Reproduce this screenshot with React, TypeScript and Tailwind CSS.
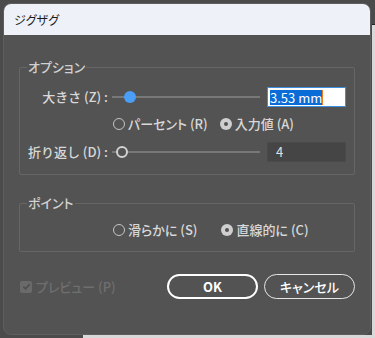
const font = "font-['Noto_Sans_CJK_JP','Noto_Sans',sans-serif] [font-feature-settings:'palt']";

function Radio({ checked, label }: { checked?: boolean; label: string }) {
  return (
    <div className="flex items-center gap-[3px]">
      {checked ? (
        <span className="flex h-[12px] w-[12px] items-center justify-center rounded-full bg-[#cfcfcf]">
          <span className="h-[4px] w-[4px] rounded-full bg-[#535353]" />
        </span>
      ) : (
        <span className="h-[12px] w-[12px] rounded-full border border-[#c4c4c4]" />
      )}
      <span>{label}</span>
    </div>
  );
}

function Slider({ pos, filled }: { pos: number; filled?: boolean }) {
  return (
    <div className="relative h-[20px] w-[148px]">
      <div className="absolute left-0 right-0 top-[9px] h-[2px] bg-[#787878]" />
      {filled ? (
        <span
          className="absolute top-[4px] h-[12px] w-[12px] rounded-full bg-[#4a9ef5]"
          style={{ left: pos }}
        />
      ) : (
        <span
          className="absolute top-[4px] h-[12px] w-[12px] rounded-full border-2 border-[#d2d2d2] bg-[#535353]"
          style={{ left: pos }}
        />
      )}
    </div>
  );
}

export default function App() {
  return (
    <div className={`relative h-[338px] w-[375px] overflow-hidden bg-[#4b4b4b] ${font}`}>
      <div className="absolute left-[372px] top-[24px] h-[320px] w-[10px] border-t border-[#222] bg-[#d9d9d9]" />
      <div className="absolute left-[83px] top-[335px] h-[10px] w-[300px] bg-[#d9d9d9]" />

      <div className="absolute left-[3px] top-[3px] flex h-[332px] w-[368px] flex-col overflow-hidden rounded-[8px] border border-[#5e5e5e] bg-[#535353]">
        <div className="flex h-[31px] shrink-0 items-center bg-[#eef1f8] pl-[10px] text-[12px] text-[#1a1a1a]">
          ジグザグ
        </div>

        <div className="flex flex-1 flex-col px-[15px] pt-[24px] text-[13px] font-medium text-[#d8d8d8]">
          <fieldset className="rounded-[2px] border border-[#666] pb-[12px]">
            <legend className="ml-[7px] px-[1px] text-[13px] leading-[16px] text-[#d0d0d0]">オプション</legend>
            <div className="mt-[12px] flex h-[20px] items-center">
              <div className="w-[88px] whitespace-nowrap text-right [font-feature-settings:normal]">大きさ (Z) :</div>
              <div className="ml-[4px]">
                <Slider pos={12} filled />
              </div>
              <div className="ml-[7px] flex h-[20px] w-[79px] items-center border border-[#3d8fe0] bg-white pl-[2px] text-[13px] font-normal text-white">
                <span className="bg-[#0a6cd6] leading-[15px]">3.53 mm</span>
                <span className="h-[15px] w-[1px] bg-[#f07a1a]" />
              </div>
            </div>
            <div className="mt-[7px] flex h-[20px] items-center gap-[12px] pl-[93px]">
              <Radio label="パーセント (R)" />
              <Radio checked label="入力値 (A)" />
            </div>
            <div className="mt-[8px] flex h-[20px] items-center">
              <div className="w-[88px] whitespace-nowrap text-right [font-feature-settings:normal]">折り返し (D) :</div>
              <div className="ml-[4px]">
                <Slider pos={4} />
              </div>
              <div className="ml-[7px] flex h-[20px] w-[79px] items-center border border-[#4a4a4a] bg-[#454545] pl-[8px] text-[13px] font-normal text-[#e0e0e0]">
                4
              </div>
            </div>
          </fieldset>

          <fieldset className="mt-[20px] rounded-[2px] border border-[#666] pb-[11px]">
            <legend className="ml-[7px] px-[1px] text-[13px] leading-[16px] text-[#d0d0d0]">ポイント</legend>
            <div className="mt-[9px] flex h-[20px] items-center gap-[24px] pl-[93px]">
              <Radio label="滑らかに (S)" />
              <Radio checked label="直線的に (C)" />
            </div>
          </fieldset>

          <div className="mt-[22px] flex h-[25px] items-center">
            <div className="flex items-center gap-[4px] pl-[1px] text-[#6f6f6f]">
              <span className="flex h-[12px] w-[12px] items-center justify-center rounded-[2px] bg-[#6a6a6a]">
                <svg width="9" height="9" viewBox="0 0 10 10">
                  <path d="M1.5 5.2 L4 7.6 L8.6 2.4" fill="none" stroke="#4e4e4e" strokeWidth="1.8" />
                </svg>
              </span>
              <span>プレビュー (P)</span>
            </div>
            <button className="ml-auto flex h-[25px] w-[91px] items-center justify-center rounded-full border-2 border-white text-[13px] font-bold text-white">
              OK
            </button>
            <button className="ml-[6px] flex h-[25px] w-[91px] items-center justify-center rounded-full border border-[#e6e6e6] text-[13px] text-white">
              キャンセル
            </button>
          </div>
        </div>
      </div>
    </div>
  );
}
